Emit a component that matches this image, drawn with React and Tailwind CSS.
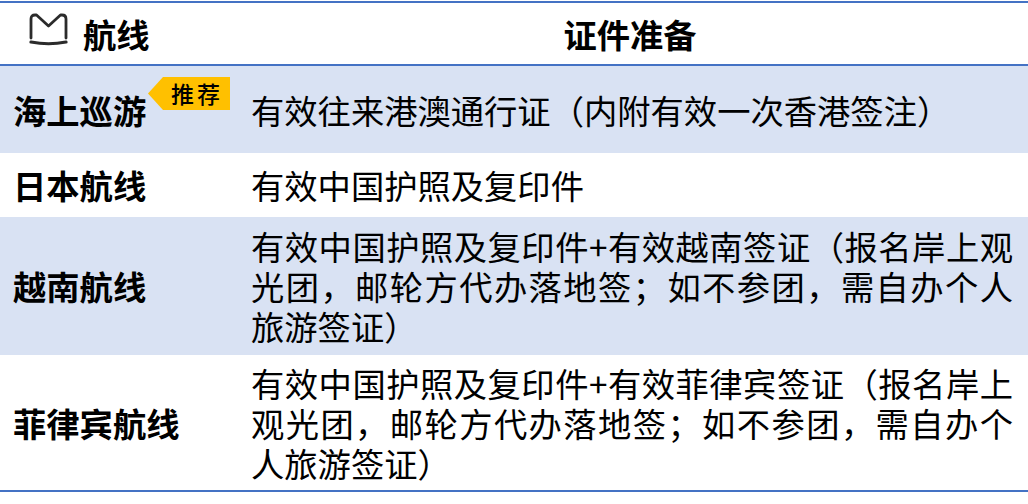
const rows = [
  {
    name: '海上巡游',
    text: '有效往来港澳通行证（内附有效一次香港签注）',
    height: 'h-[87px]',
    shaded: true,
    badge: true,
  },
  {
    name: '日本航线',
    text: '有效中国护照及复印件',
    height: 'h-[64px]',
    shaded: false,
  },
  {
    name: '越南航线',
    text: '有效中国护照及复印件+有效越南签证（报名岸上观光团，邮轮方代办落地签；如不参团，需自办个人旅游签证）',
    height: 'h-[138px]',
    shaded: true,
  },
  {
    name: '菲律宾航线',
    text: '有效中国护照及复印件+有效菲律宾签证（报名岸上观光团，邮轮方代办落地签；如不参团，需自办个人旅游签证）',
    height: 'h-[135px]',
    shaded: false,
  },
];

const RouteIcon = () => (
  <svg
    width="40"
    height="34"
    viewBox="0 0 40 34"
    fill="none"
    stroke="#2b2b2b"
    strokeWidth="2.8"
    strokeLinecap="round"
    strokeLinejoin="round"
    className="-mt-[7px] shrink-0"
  >
    <path d="M2 25 V6 Q2 2 6 2 H7.5 L19.5 13 L31.5 2 H33 Q37 2 37 6 V25" />
    <path d="M2 29 Q19.5 32.5 37 29" strokeWidth="3.2" />
  </svg>
);

const Badge = () => (
  <div className="absolute left-[148px] top-[11px] flex h-[33px] w-[82px] items-center justify-center bg-[#ffc000] pl-[16px] text-[23px] font-medium leading-none tracking-[3px] text-black [clip-path:polygon(15px_0,100%_0,100%_100%,15px_100%,0_50%)]">
    推荐
  </div>
);

export default function App() {
  return (
    <div className="h-[504px] w-[1028px] bg-white pt-px font-['Noto_Sans_CJK_SC',sans-serif] text-black">
      <div className="border-y-2 border-[#4472c4]">
        <div className="flex h-[63px] border-b-2 border-[#4472c4]">
          <div className="flex w-[240px] items-center gap-[14px] pl-[29px]">
            <RouteIcon />
            <span className="text-[33.3px] font-bold leading-[40px]">航线</span>
          </div>
          <div className="flex flex-1 items-center justify-center pr-2">
            <span className="text-[33.3px] font-bold leading-[40px]">证件准备</span>
          </div>
        </div>

        {rows.map((row) => (
          <div
            key={row.name}
            className={`flex ${row.height} ${row.shaded ? 'bg-[#d9e2f3]' : 'bg-white'}`}
          >
            <div className="relative flex w-[240px] shrink-0 items-center pl-[13px]">
              <span className="text-[33.3px] font-bold leading-[40px]">{row.name}</span>
              {row.badge && <Badge />}
            </div>
            <div className="flex w-[788px] items-center pl-[11px] pr-[15px]">
              <p className="text-justify text-[33.3px] leading-[40px]">{row.text}</p>
            </div>
          </div>
        ))}
      </div>
    </div>
  );
}
